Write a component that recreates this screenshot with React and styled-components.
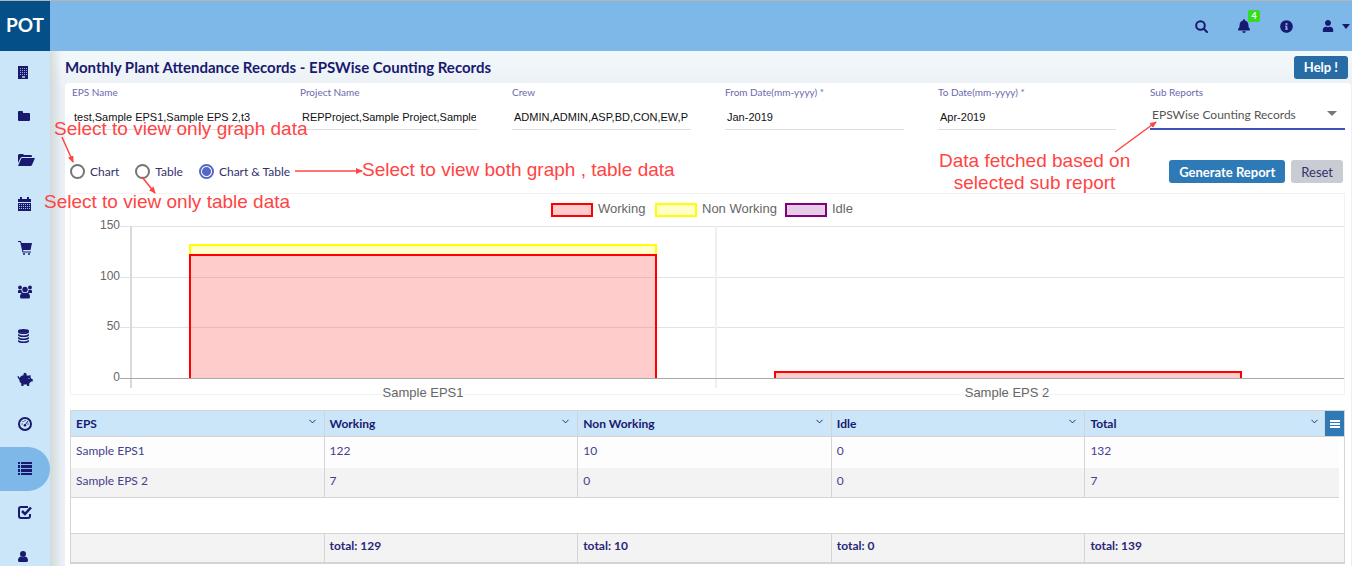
import React from "react";
import styled, { createGlobalStyle } from "styled-components";
import { FaBell, FaInfoCircle, FaUser } from "react-icons/fa";
import { ChevronDown } from "lucide-react";

const navy = "#191970";
const lato = `Lato, "Liberation Sans", sans-serif`;
const arial = `"Liberation Sans", Arial, sans-serif`;

const Global = createGlobalStyle`
  * { box-sizing: border-box; }
  body { margin: 0; background: #edf3f7; color: ${navy}; font-family: ${lato}; font-size: 13px; }
  button, input, select { font-family: inherit; }
`;
const Shell = styled.div`
  display: flex;
  flex-direction: column;
  height: 100vh;
  overflow: hidden;
  border-top: 1px solid #b4b4b6;
`;
const TopBar = styled.header`
  display: flex;
  flex: 0 0 50px;
  align-items: stretch;
  background: #7db8e8;
`;
const Logo = styled.a`
  display: flex;
  width: 50px;
  align-items: center;
  justify-content: center;
  padding-bottom: 2px;
  background: #044f88;
  color: #fff;
  font-size: 19px;
  font-weight: 700;
  line-height: 24px;
  text-decoration: none;
`;
const Tools = styled.div`
  display: flex;
  margin-left: auto;
  align-items: center;
  gap: 29px;
  padding-right: 2px;
`;
const Tool = styled.button`
  position: relative;
  display: flex;
  align-items: center;
  gap: 8px;
  padding: 0;
  border: 0;
  background: none;
  color: ${navy};
`;
const Badge = styled.span`
  position: absolute;
  top: -9px;
  left: 11px;
  width: 12px;
  height: 12px;
  border-radius: 2px;
  background: #33dd22;
  color: #fff;
  font: 700 9px/12px ${lato};
  text-align: center;
`;
const Body = styled.div`
  display: flex;
  flex: 1;
  min-height: 0;
`;
const SideBar = styled.nav`
  flex: 0 0 50px;
  background: #cbe6f9;
  overflow: hidden;
`;
const SideLink = styled.a`
  display: flex;
  height: 44px;
  align-items: center;
  padding: 0 0 2px 17px;
  border-radius: 0 22px 22px 0;
  background: ${(p) => (p.$active ? "#7db8e8" : "none")};
  color: ${navy};
`;
const Main = styled.main`
  flex: 1;
  min-width: 0;
  padding-left: 15px;
  background:
    linear-gradient(90deg, rgba(120, 135, 120, 0.22), rgba(120, 135, 120, 0) 12px),
    linear-gradient(#f2f8fa, #eaf0f5 40px);
`;
const TitleRow = styled.div`
  display: flex;
  height: 32px;
  align-items: center;
  justify-content: space-between;
  padding-right: 4px;
`;
const Title = styled.h1`
  margin: 0;
  font-size: 15px;
  font-weight: 700;
  line-height: 20px;
`;
const Button = styled.button`
  height: 23px;
  padding: 0 10px;
  border: 0;
  border-radius: 3px;
  background: ${(p) => p.$bg};
  color: ${(p) => p.$fg || "#fff"};
  font-size: 13px;
  font-weight: ${(p) => (p.$fg ? 400 : 700)};
  line-height: 20px;
`;
const Card = styled.section`
  position: relative;
  min-height: 500px;
  margin-right: 1px;
  padding: 3px 6px 0 5px;
  border-radius: 4px;
  background: #fff;
`;
const Fields = styled.div`
  display: grid;
  grid-template-columns: 228fr 212fr 213fr 213fr 212fr 195fr;
  padding-left: 2px;
`;
const Field = styled.div`
  position: relative;
  display: flex;
  flex-direction: column;
  margin-right: ${(p) => (p.$last ? 0 : 34)}px;
  border-bottom: ${(p) => (p.$last ? "2px solid #3f51b5" : "1px solid #dedede")};
  height: 44px;
`;
const Label = styled.label`
  color: #6c68ad;
  font-size: 10px;
  line-height: 12px;
`;
const Input = styled.input`
  width: 100%;
  flex: 1;
  padding: 6px 2px 0;
  border: 0;
  background: none;
  color: #111;
  font: 11px ${arial};
  outline: 0;
`;
const Select = styled.select`
  width: 100%;
  flex: 1;
  padding: 3px 2px 0;
  border: 0;
  appearance: none;
  background: none;
  color: #555;
  font-size: 12px;
  outline: 0;
`;
const Caret = styled.span`
  position: absolute;
  right: 8px;
  top: 25px;
  border: 5px solid transparent;
  border-top-color: #777;
  border-bottom: 0;
  pointer-events: none;
`;
const Controls = styled.div`
  display: flex;
  height: 63px;
  align-items: center;
  justify-content: space-between;
  padding: 20px 2px 0 0;
`;
const Group = styled.div`
  display: flex;
  align-items: center;
  gap: ${(p) => p.$gap}px;
`;
const Choice = styled.label`
  display: flex;
  align-items: center;
  gap: 5px;
  color: #34316f;
  font-size: 12px;
  line-height: 16px;
`;
const Radio = styled.input`
  width: 15px;
  height: 15px;
  margin: 0;
  border: 2px solid #757575;
  border-radius: 50%;
  appearance: none;
  &:checked {
    border-color: #5567c4;
    background: radial-gradient(circle, #5567c4 4px, #fff 5px);
  }
`;
const ChartBox = styled.div`
  height: 202px;
  border: 1px solid #f2f2f2;
  overflow: visible;
`;
const ChartSvg = styled.svg`
  display: block;
  width: 100%;
  overflow: visible;
  font: 13px ${arial};
  fill: #666;
`;
const Grid = styled.table`
  width: 100%;
  margin-top: 15px;
  border: 1px solid #d4d4d4;
  border-bottom-width: 2px;
  border-collapse: separate;
  border-spacing: 0;
  table-layout: fixed;
`;
const GutterCol = styled.col`
  width: 5px;
`;
const Th = styled.th`
  position: relative;
  height: 26px;
  padding: 0 5px;
  border-right: ${(p) => (p.$last ? 0 : 1)}px solid #d4d4d4;
  border-bottom: 1px solid #d4d4d4;
  background: #cbe6f9;
  font-size: 12px;
  font-weight: 700;
  line-height: 16px;
  text-align: left;
`;
const Head = styled.div`
  display: flex;
  align-items: center;
  justify-content: space-between;
  padding-right: ${(p) => (p.$last ? 19 : 1)}px;
  svg { margin-bottom: 4px; }
`;
const MenuButton = styled.button`
  position: absolute;
  top: 0;
  right: 0;
  display: flex;
  width: 20px;
  height: 25px;
  align-items: center;
  justify-content: center;
  padding: 0;
  border: 0;
  border-left: 1px solid #d4d4d4;
  background: #2d7ab6;
  color: #fff;
`;
const Td = styled.td`
  height: ${(p) => p.$h}px;
  padding: 0 5px 4px;
  border-right: ${(p) => (p.$last ? 0 : 1)}px solid #d4d4d4;
  border-bottom: ${(p) => (p.$line ? 1 : 0)}px solid #d4d4d4;
  background: ${(p) => p.$bg};
  color: ${(p) => (p.$bold ? "#2a277a" : "#45418d")};
  font-size: 12px;
  font-weight: ${(p) => (p.$bold ? 700 : 400)};
  line-height: 16px;
`;
const Gutter = styled.td`
  padding: 0;
`;
const Note = styled.p`
  position: absolute;
  left: ${(p) => p.$x}px;
  top: ${(p) => p.$y}px;
  margin: 0;
  color: #ff4444;
  font: 19px/22px ${arial};
  text-align: center;
  white-space: nowrap;
`;
const Arrows = styled.svg`
  position: absolute;
  left: 0;
  top: 0;
  overflow: visible;
  pointer-events: none;
`;

const Icon = ({ children }) => (
  <svg width="16" height="16" viewBox="0 0 16 16" fill="currentColor" aria-hidden="true">{children}</svg>
);
const sky = "#cbe6f9";
const coinRows = [1, 4, 7, 10];

const sideIcons = [
  ["Sites", <Icon>
    <path d="M1 2h10v13H1z" />
    <path d="M3 4h1v1H3zM5 4h1v1H5zM7 4h1v1H7zM9 4h1v1H9zM3 6h1v1H3zM5 6h1v1H5zM7 6h1v1H7zM9 6h1v1H9zM3 8h1v1H3zM5 8h1v1H5zM7 8h1v1H7zM9 8h1v1H9zM3 10h1v1H3zM5 10h1v1H5zM7 10h1v1H7zM9 10h1v1H9zM5 12h3v2H5z" fill={sky} opacity=".7" />
  </Icon>],
  ["Projects", <Icon><path d="M1 4q0-1 1-1h3q1 0 1 1v1h6q1 0 1 1v6q0 1-1 1H2q-1 0-1-1z" /></Icon>],
  ["Open projects", <svg width="18" height="16" viewBox="0 0 18 16" fill="currentColor" aria-hidden="true"><path d="M1 11V3l1-1h4l1 1h7q1 0 1 2H5q-1 0-1.500 1zM5 6h13l-3 7q-.5 1-1.500 1H1l3-7q.3-1 1-1z" /></svg>],
  ["Calendar", <Icon>
    <path d="M1 3h2V1h2v2h5V1h2v2h2v3H1zM1 7h13v8H1z" />
    <path d="M2 8.500h11M2 10.500h11M2 12.500h11" stroke={sky} strokeDasharray="1 1" opacity=".8" />
  </Icon>],
  ["Procurement", <Icon><path d="M1 1h3l.6 2H15l-1.500 7H6l.4 1.500H14v1H5.500L3.200 2H1z" /><circle cx="7" cy="14" r="1" /><circle cx="12" cy="14" r="1" /></Icon>],
  ["Teams", <Icon>
    <circle cx="3" cy="3.500" r="1.900" /><circle cx="13" cy="3.500" r="1.900" /><circle cx="8" cy="5.500" r="2.700" />
    <path d="M1 9V7q0-1 1-1h2.500q0 2 1.200 3zM15 9V7q0-1-1-1h-2.500q0 2-1.200 3zM3 13q0-4 3-4.500 2 1 4 0 3 .5 3 4.500 0 1.500-1.500 1.500h-7Q3 14.500 3 13z" />
  </Icon>],
  ["Data", <Icon>
    {coinRows.map((y) => <path key={y} d={`M1 ${y + 2}q5.500 3 11 0v1q0 2-5.500 2T1 ${y + 3}z`} />)}
    <ellipse cx="6.500" cy="2.800" rx="5.500" ry="1.900" />
  </Icon>],
  ["Cost", <Icon>
    <path d="M1 4q1 0 1.500 2Q4 3 8 3q2 0 3 .8L13.500 3v2.300q.7.700 1 1.700h1.200v2.500H14q-.7 1.200-1.800 2V14H10v-1.500H6.500V14H4.300v-2.500Q2.300 10 2.200 7.500.8 6.500.5 4.500z" />
    <circle cx="8" cy="2.300" r="1.500" /><circle cx="12" cy="6.500" r=".6" fill={sky} />
  </Icon>],
  ["Dashboard", <Icon>
    <circle cx="8" cy="8" r="6" fill="none" stroke="currentColor" strokeWidth="2" />
    <path d="M7.300 10L11 5M4.500 8h1.200M5.500 5l1 1M8 4v1.200M10.500 8h1.200" stroke="currentColor" />
    <circle cx="8" cy="9.300" r="1.300" />
  </Icon>],
  ["Reports", <Icon><path d="M1 2h2v2H1zM4 2h11v2H4zM1 5h2v3H1zM4 5h11v3H4zM1 9h2v3H1zM4 9h11v3H4zM1 13h2v2H1zM4 13h11v2H4z" /></Icon>],
  ["Approvals", <Icon>
    <path d="M11 3H4Q2 3 2 5v7q0 2 2 2h7q2 0 2-2v-2" fill="none" stroke="currentColor" strokeWidth="2" />
    <path d="M5 7l3 3 6-6.500" fill="none" stroke="currentColor" strokeWidth="2.500" />
  </Icon>],
  ["Profile", <Icon><circle cx="6" cy="6" r="3" /><path d="M1 12.500Q1 9 4 8.500q2 1.500 4 0 3 .5 3 4 0 1.500-1.500 1.500h-7Q1 14 1 12.500z" /></Icon>],
];

const columns = ["EPS", "Working", "Non Working", "Idle", "Total"];
const rows = [
  ["Sample EPS1", 122, 10, 0, 132],
  ["Sample EPS 2", 7, 0, 0, 7],
];
const totals = ["", "total: 129", "total: 10", "total: 0", "total: 139"];
const fields = [
  ["eps", "EPS Name", "test,Sample EPS1,Sample EPS 2,t3"],
  ["project", "Project Name", "REPProject,Sample Project,Sample"],
  ["crew", "Crew", "ADMIN,ADMIN,ASP,BD,CON,EW,P"],
  ["from", "From Date(mm-yyyy) *", "Jan-2019"],
  ["to", "To Date(mm-yyyy) *", "Apr-2019"],
];

function Chart() {
  return (
    <ChartSvg viewBox="0 0 1273 206" role="img" aria-label="Attendance by EPS">
      {[["Working", 481, "#ff0000", "#ffcccc"], ["Non Working", 585, "#ffff00", "#ffffcc"], ["Idle", 715, "#800080", "#e6cce6"]].map(([t, x, s, f]) => (
        <g key={t}>
          <rect x={x} y="10" width="40" height="12" fill={f} stroke={s} strokeWidth="2" />
          <text x={x + 46} y="19">{t}</text>
        </g>
      ))}
      <path d="M49 32.5H1273M49 83.5H1273M49 133.5H1273" stroke="#e3e3e3" />
      <path d="M645 32V194" stroke="#f0f0f0" strokeWidth="2" />
      <path d="M60 32V194" stroke="#d9d9d9" strokeWidth="2" />
      <rect x="118" y="50" width="468" height="10" fill="#ffffcc" />
      <path d="M119 60V51H585V60" fill="none" stroke="#ff0" strokeWidth="2" />
      <path d="M119 184V61H585V184" fill="#ffcccc" stroke="red" strokeWidth="2" />
      <path d="M120 83.5H584M120 133.5H584" stroke="#e9b9b9" />
      <path d="M704 184V178H1170V184" fill="#ffcccc" stroke="red" strokeWidth="2" />
      <path d="M49 184.5H1273" stroke="#a9a9a9" />
      {[[150, 35], [100, 86], [50, 136], [0, 187]].map(([t, y]) => <text key={t} x="49" y={y} textAnchor="end" fontSize="12">{t}</text>)}
      <text x="352" y="203" textAnchor="middle">Sample EPS1</text>
      <text x="936" y="203" textAnchor="middle">Sample EPS 2</text>
    </ChartSvg>
  );
}

export default function App() {
  return (
    <Shell>
      <Global />
      <TopBar>
        <Logo href="#home">POT</Logo>
        <Tools>
          <Tool aria-label="Search">
            <svg width="13" height="13" viewBox="0 0 13 13" fill="none" stroke="currentColor" strokeWidth="2" strokeLinecap="round" aria-hidden="true">
              <circle cx="5.500" cy="5.500" r="4.300" /><path d="M9 9l3 3" />
            </svg>
          </Tool>
          <Tool aria-label="Notifications"><FaBell size={14} /><Badge>4</Badge></Tool>
          <Tool aria-label="Information"><FaInfoCircle size={13} /></Tool>
          <Tool aria-label="Account">
            <FaUser size={12} />
            <svg width="8" height="5" viewBox="0 0 8 5" fill="currentColor" aria-hidden="true"><path d="M0 0h8L4 5z" /></svg>
          </Tool>
        </Tools>
      </TopBar>
      <Body>
        <SideBar>
          {sideIcons.map(([name, icon]) => (
            <SideLink key={name} href={"#" + name} aria-label={name} $active={name === "Reports"}>{icon}</SideLink>
          ))}
        </SideBar>
        <Main>
          <TitleRow>
            <Title>Monthly Plant Attendance Records - EPSWise Counting Records</Title>
            <Button $bg="#276ca5">Help !</Button>
          </TitleRow>
          <Card>
            <Fields>
              {fields.map(([id, label, value]) => (
                <Field key={id}>
                  <Label htmlFor={id}>{label}</Label>
                  <Input id={id} defaultValue={value} />
                </Field>
              ))}
              <Field $last>
                <Label htmlFor="sub">Sub Reports</Label>
                <Select id="sub"><option>EPSWise Counting Records</option></Select>
                <Caret />
              </Field>
            </Fields>
            <Controls>
              <Group $gap={16}>
                {["Chart", "Table", "Chart & Table"].map((t) => (
                  <Choice key={t}><Radio type="radio" name="view" defaultChecked={t === "Chart & Table"} />{t}</Choice>
                ))}
              </Group>
              <Group $gap={6}>
                <Button $bg="#2d7ab6">Generate Report</Button>
                <Button $bg="#c9ccd2" $fg="#34316f">Reset</Button>
              </Group>
            </Controls>
            <ChartBox><Chart /></ChartBox>
            <Grid>
              <colgroup>
                <col /><col /><col /><col /><col /><GutterCol />
              </colgroup>
              <thead>
                <tr>
                  {columns.map((c, i) => (
                    <Th key={c} $last={i === 4} colSpan={i === 4 ? 2 : 1}>
                      <Head $last={i === 4}>{c}<ChevronDown size={11} /></Head>
                      {i === 4 && (
                        <MenuButton aria-label="Grid menu">
                          <svg width="10" height="8" viewBox="0 0 10 8" fill="currentColor" aria-hidden="true"><path d="M0 0h10v2H0zM0 3h10v2H0zM0 6h10v2H0z" /></svg>
                        </MenuButton>
                      )}
                    </Th>
                  ))}
                </tr>
              </thead>
              <tbody>
                {rows.map((r, j) => (
                  <tr key={r[0]}>
                    {r.map((v, i) => <Td key={i} $h={j ? 30 : 31} $bg={j ? "#f3f3f3" : "#fdfdfd"} $line={j === 1} $last={i === 4}>{v}</Td>)}
                    <Gutter />
                  </tr>
                ))}
                <tr><Td colSpan={6} $h={36} $line $last /></tr>
              </tbody>
              <tfoot>
                <tr>{totals.map((v, i) => <Td key={i} colSpan={i === 4 ? 2 : 1} $h={28} $bg="#f3f3f3" $bold $last={i === 4}>{v}</Td>)}</tr>
              </tfoot>
            </Grid>
            <Note $x={-11} $y={35}>Select to view only graph data</Note>
            <Note $x={-21} $y={108}>Select to view only table data</Note>
            <Note $x={297} $y={76}>Select to view both graph , table data</Note>
            <Note $x={874} $y={67}>Data fetched based on<br />selected sub report</Note>
            <Arrows width="1286" height="130" aria-hidden="true">
              <defs>
                <marker id="tip" markerWidth="7" markerHeight="6" refX="6" refY="3" orient="auto" markerUnits="userSpaceOnUse">
                  <path d="M0 0L7 3L0 6z" fill="#ff4444" />
                </marker>
              </defs>
              <g stroke="#ff4444" strokeWidth="1.5" fill="none">
                <path d="M-3 54L8 79" markerEnd="url(#tip)" />
                <path d="M77 94L90 110" markerEnd="url(#tip)" />
                <path d="M230 88H297" markerEnd="url(#tip)" />
                <path d="M1050 69L1091 39" markerEnd="url(#tip)" />
              </g>
            </Arrows>
          </Card>
        </Main>
      </Body>
    </Shell>
  );
}
